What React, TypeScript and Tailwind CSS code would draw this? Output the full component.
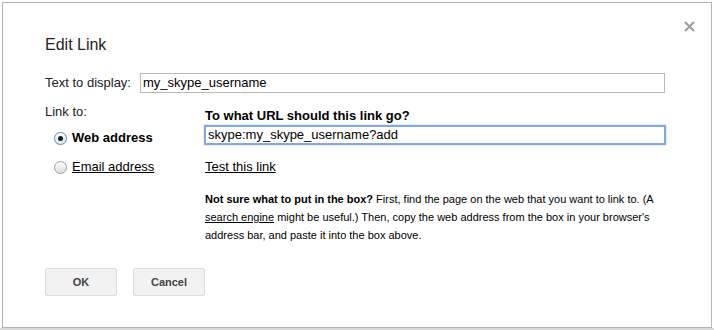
import React from "react";

function Radio({ checked }: { checked?: boolean }) {
  return (
    <span
      className={
        "flex h-[13px] w-[13px] shrink-0 items-center justify-center rounded-full border " +
        (checked
          ? "border-[#6f8fb8] bg-[linear-gradient(#ffffff,#d8e3f0)] shadow-[0_0_1px_#9cb7d8]"
          : "border-[#9a9a9a] bg-[linear-gradient(#ffffff,#dcdcdc)]")
      }
    >
      {checked && <span className="h-[5px] w-[5px] rounded-full bg-[#1a1a1a]" />}
    </span>
  );
}

export default function App() {
  return (
    <div
      className="relative h-[330px] w-[714px] overflow-hidden bg-white text-[#222]"
      style={{ fontFamily: '"Liberation Sans", Arial, sans-serif' }}
    >
      <div className="absolute bottom-0 left-0 h-[2px] w-full bg-[#d9d9d9]" />
      <div className="relative ml-[2px] mt-[2px] h-[326px] w-[710px] border border-[#b4b4b4] bg-white pl-[42px] pt-[32px]">
        <svg
          className="absolute left-[681px] top-[18px]"
          width="11"
          height="11"
          viewBox="0 0 11 11"
        >
          <path d="M1 1 L10 10 M10 1 L1 10" stroke="#9b9b9b" strokeWidth="2" />
        </svg>

        <div className="h-[20px] text-[16px] leading-[20px] text-[#222]">Edit Link</div>

        <div className="mt-[18px] flex h-[20px] items-center">
          <div className="w-[95px] text-[13px] leading-[16px]">Text to display:</div>
          <div className="flex h-[20px] w-[525px] items-center border border-[#b9b9b9] pl-[2px] text-[13px] text-black">
            my_skype_username
          </div>
        </div>

        <div className="mt-[11px] flex">
          <div className="w-[159px]">
            <div className="h-[16px] text-[13px] leading-[16px]">Link to:</div>
            <div className="mt-[9px] flex h-[18px] items-center pl-[9px]">
              <Radio checked />
              <span className="ml-[5px] text-[13px] font-bold leading-[16px] text-black">Web address</span>
            </div>
            <div className="mt-[11px] flex h-[18px] items-center pl-[9px]">
              <Radio />
              <span className="ml-[5px] text-[13px] leading-[16px] text-black underline">Email address</span>
            </div>
          </div>
          <div className="pt-[4px]">
            <div className="h-[16px] pl-[1px] text-[13px] font-bold leading-[16px] text-black">
              To what URL should this link go?
            </div>
            <div className="mt-[1px] flex h-[20px] w-[462px] items-center border-2 border-[#86a9d8] pl-[2px] text-[13px] text-black shadow-[0_0_2px_#a9c4e8]">
              skype:my_skype_username?add
            </div>
            <div className="mt-[14px] h-[16px] pl-[1px] text-[13px] leading-[16px] text-black underline">
              Test this link
            </div>
            <div className="mt-[15px] whitespace-nowrap pl-[1px] text-[11px] leading-[18px] text-black">
              <b>Not sure what to put in the box?</b> First, find the page on the web that you want to link to. (A
              <br />
              <span className="underline">search engine</span> might be useful.) Then, copy the web address from the box in your browser&apos;s
              <br />
              address bar, and paste it into the box above.
            </div>
          </div>
        </div>

        <div className="mt-[24px] flex gap-[16px]">
          <div className="flex h-[28px] w-[72px] items-center justify-center rounded-[2px] border border-[#dcdcdc] bg-[#f2f2f2] text-[11px] font-bold text-[#444]">
            OK
          </div>
          <div className="flex h-[28px] w-[72px] items-center justify-center rounded-[2px] border border-[#dcdcdc] bg-[#f2f2f2] text-[11px] font-bold text-[#444]">
            Cancel
          </div>
        </div>
      </div>
    </div>
  );
}
